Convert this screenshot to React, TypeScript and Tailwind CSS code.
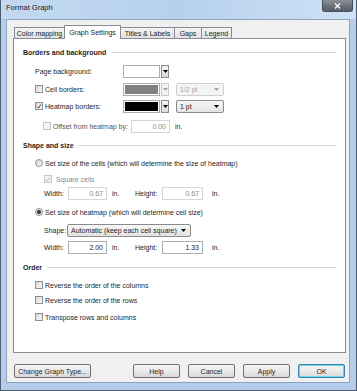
import React from "react";

function Arrow({ dim = false }: { dim?: boolean }) {
  return (
    <svg viewBox="0 0 5 3" className="h-[3px] w-[5px]">
      <path d="M0 0h5L2.5 3z" fill={dim ? "#a3a3a3" : "#000"} />
    </svg>
  );
}

function Check({ checked = false, disabled = false }: { checked?: boolean; disabled?: boolean }) {
  return (
    <span
      className={`flex h-[8px] w-[8px] shrink-0 items-center justify-center border ${
        disabled ? "border-[#c5c5c5] bg-[#f3f3f3]" : "border-[#8e8f8f] bg-gradient-to-br from-[#d9d9d9] to-[#f7f7f7]"
      }`}
    >
      {checked && (
        <svg viewBox="0 0 8 8" className="h-[7px] w-[7px]">
          <path d="M1.3 4.1L3.1 6.1L6.7 1.4" fill="none" stroke={disabled ? "#a8a8a8" : "#333"} strokeWidth="1.2" />
        </svg>
      )}
    </span>
  );
}

function Radio({ checked = false }: { checked?: boolean }) {
  return (
    <span className="flex h-[8px] w-[8px] shrink-0 items-center justify-center rounded-full border border-[#8e8f8f] bg-gradient-to-br from-[#d6d6d6] to-[#f8f8f8]">
      {checked && <span className="h-[4px] w-[4px] rounded-full bg-[#2b3340]" />}
    </span>
  );
}

function Swatch({ fill, disabled = false }: { fill: string; disabled?: boolean }) {
  return (
    <div className="flex h-[13px] w-[46px] shrink-0 items-stretch">
      <div className="w-[37px] border border-[#abadb3] bg-white p-[1px]">
        <div className="h-full w-full" style={{ background: fill }} />
      </div>
      <div
        className={`ml-[1px] flex w-[8px] items-center justify-center border ${
          disabled ? "border-[#c9c9c9] bg-[#f4f4f4]" : "border-[#8b8b8b] bg-gradient-to-b from-[#f6f6f6] to-[#dcdcdc]"
        }`}
      >
        <Arrow dim={disabled} />
      </div>
    </div>
  );
}

function Combo({ text, disabled = false, className = "" }: { text: string; disabled?: boolean; className?: string }) {
  return (
    <div
      className={`flex h-[13px] shrink-0 items-center justify-between rounded-[2px] border pl-[3px] pr-[4px] ${
        disabled
          ? "border-[#cfcfcf] bg-[#f4f4f4] text-[#a3a3a3]"
          : "border-[#8b8b8b] bg-gradient-to-b from-[#f7f7f7] to-[#e3e3e3]"
      } ${className}`}
    >
      <span>{text}</span>
      <Arrow dim={disabled} />
    </div>
  );
}

function Field({ value, disabled = false, className = "" }: { value: string; disabled?: boolean; className?: string }) {
  return (
    <div
      className={`flex h-[13px] shrink-0 items-center justify-end border bg-white pr-[3px] ${
        disabled ? "border-[#d5d5d5] text-[#8a8a8a]" : "border-[#abadb3]"
      } ${className}`}
    >
      {value}
    </div>
  );
}

function Heading({ text, mt }: { text: string; mt: string }) {
  return (
    <div className={`flex h-[14px] items-center pl-[9px] pr-[9px] ${mt}`}>
      <span className="font-bold">{text}</span>
      <span className="ml-[5px] h-px flex-1 bg-[#d5d5d5]" />
    </div>
  );
}

function Btn({ children, className = "", def = false }: { children: React.ReactNode; className?: string; def?: boolean }) {
  return (
    <div
      className={`flex h-[14px] shrink-0 items-center justify-center rounded-[2px] border bg-gradient-to-b from-[#f3f3f3] via-[#ebebeb] to-[#d7d7d7] ${
        def ? "border-[#3c7fb1] shadow-[inset_0_0_0_1px_#6fd3e2]" : "border-[#707070]"
      } ${className}`}
    >
      {children}
    </div>
  );
}

const tabs = [
  { label: "Color mapping", w: "w-[51px]" },
  { label: "Graph Settings", w: "w-[57px]", active: true },
  { label: "Titles & Labels", w: "w-[55px]" },
  { label: "Gaps", w: "w-[28px]" },
  { label: "Legend", w: "w-[31px]" },
];

export default function App() {
  return (
    <div className="flex h-[391px] w-[357px] flex-col overflow-hidden border-x border-b border-[#4d5d70] bg-[#b3cdea] font-['Liberation_Sans',Arial,sans-serif] text-[7px] leading-none text-[#1e1e1e]">
      {/* title bar */}
      <div className="flex h-[19px] shrink-0 items-start bg-gradient-to-r from-[#c3d9f1] via-[#b6d0ed] to-[#cfe2f6]">
        <span className="mt-[4px] pl-[5px] text-[7.5px] text-[#1a1a1a]">Format Graph</span>
        <div className="ml-auto mr-[3px] flex h-[12px] w-[31px] items-center justify-center rounded-b-[3px] border border-t-0 border-[#4a4f57] bg-gradient-to-b from-[#8d9299] via-[#6e737b] to-[#5a5f67]">
          <svg viewBox="0 0 7 6" className="h-[6px] w-[7px]">
            <path d="M1 0.5L6 5.5M6 0.5L1 5.5" stroke="#fff" strokeWidth="1.4" />
          </svg>
        </div>
      </div>

      {/* client area */}
      <div className="ml-[5px] flex h-[364px] w-[344px] flex-col border border-[#8fa3bd] bg-[#f0f0f0]">
        <div className="ml-[6px] mt-[5px] flex h-[13px] items-end">
          {tabs.map((t) =>
            t.active ? (
              <div
                key={t.label}
                className={`relative z-10 -mb-px -ml-px flex h-[14px] items-center justify-center border border-b-0 border-[#898c95] bg-white ${t.w}`}
              >
                {t.label}
              </div>
            ) : (
              <div
                key={t.label}
                className={`-ml-px flex h-[11px] items-center justify-center border border-b-0 border-[#898c95] bg-gradient-to-b from-[#f4f4f4] to-[#e1e1e1] first:ml-px ${t.w}`}
              >
                {t.label}
              </div>
            )
          )}
        </div>

        <div className="ml-[6px] flex h-[315px] w-[333px] flex-col border border-[#898c95] bg-white">
          <Heading text="Borders and background" mt="mt-[6px]" />

          <div className="mt-[5px] flex h-[14px] items-center pl-[21px]">
            <span className="w-[88px]">Page background:</span>
            <Swatch fill="#fff" />
          </div>

          <div className="mt-[4px] flex h-[14px] items-center pl-[21px]">
            <Check />
            <span className="ml-[2px] w-[78px]">Cell borders:</span>
            <Swatch fill="#808080" disabled />
            <Combo text="1/2 pt" disabled className="ml-[7px] w-[48px]" />
          </div>

          <div className="mt-[3px] flex h-[14px] items-center pl-[21px]">
            <Check checked />
            <span className="ml-[2px] w-[78px]">Heatmap borders:</span>
            <Swatch fill="#000" />
            <Combo text="1 pt" className="ml-[7px] w-[48px]" />
          </div>

          <div className="mt-[6px] flex h-[14px] items-center pl-[29px]">
            <Check disabled />
            <span className="ml-[2px] w-[78px] text-[#555]">Offset from heatmap by:</span>
            <Field value="0.00" disabled className="w-[39px]" />
            <span className="ml-[5px]">in.</span>
          </div>

          <Heading text="Shape and size" mt="mt-[5px]" />

          <div className="mt-[4px] flex h-[14px] items-center pl-[21px]">
            <Radio />
            <span className="ml-[2px]">Set size of the cells (which will determine the size of heatmap)</span>
          </div>

          <div className="mt-[2px] flex h-[14px] items-center pl-[30px]">
            <Check checked disabled />
            <span className="ml-[4px] text-[#8a8a8a]">Square cells</span>
          </div>

          <div className="flex h-[14px] items-center pl-[30px]">
            <span className="w-[24px]">Width:</span>
            <Field value="0.67" disabled className="w-[39px]" />
            <span className="ml-[5px] w-[23px]">in.</span>
            <span className="w-[27px]">Height:</span>
            <Field value="0.67" disabled className="w-[41px]" />
            <span className="ml-[9px]">in.</span>
          </div>

          <div className="mt-[5px] flex h-[14px] items-center pl-[21px]">
            <Radio checked />
            <span className="ml-[2px]">Set size of heatmap (which will determine cell size)</span>
          </div>

          <div className="mt-[4px] flex h-[14px] items-center pl-[30px]">
            <span className="w-[23px]">Shape:</span>
            <Combo text="Automatic (keep each cell square)" className="w-[124px]" />
          </div>

          <div className="mt-[3px] flex h-[14px] items-center pl-[30px]">
            <span className="w-[24px]">Width:</span>
            <Field value="2.00" className="w-[39px]" />
            <span className="ml-[5px] w-[23px]">in.</span>
            <span className="w-[27px]">Height:</span>
            <Field value="1.33" className="w-[41px]" />
            <span className="ml-[9px]">in.</span>
          </div>

          <Heading text="Order" mt="mt-[6px]" />

          <div className="mt-[4px] flex h-[14px] items-center pl-[21px]">
            <Check />
            <span className="ml-[2px]">Reverse the order of the columns</span>
          </div>
          <div className="mt-[1px] flex h-[14px] items-center pl-[21px]">
            <Check />
            <span className="ml-[2px]">Reverse the order of the rows</span>
          </div>
          <div className="mt-[3px] flex h-[14px] items-center pl-[21px]">
            <Check />
            <span className="ml-[2px]">Transpose rows and columns</span>
          </div>
        </div>

        <div className="ml-[7px] mt-[11px] flex items-center">
          <Btn className="w-[77px]">Change Graph Type...</Btn>
          <div className="ml-[42px] flex gap-[8px]">
            <Btn className="w-[47px]">Help</Btn>
            <Btn className="w-[47px]">Cancel</Btn>
            <Btn className="w-[47px]">Apply</Btn>
            <Btn className="w-[47px]" def>
              OK
            </Btn>
          </div>
        </div>
      </div>
    </div>
  );
}
